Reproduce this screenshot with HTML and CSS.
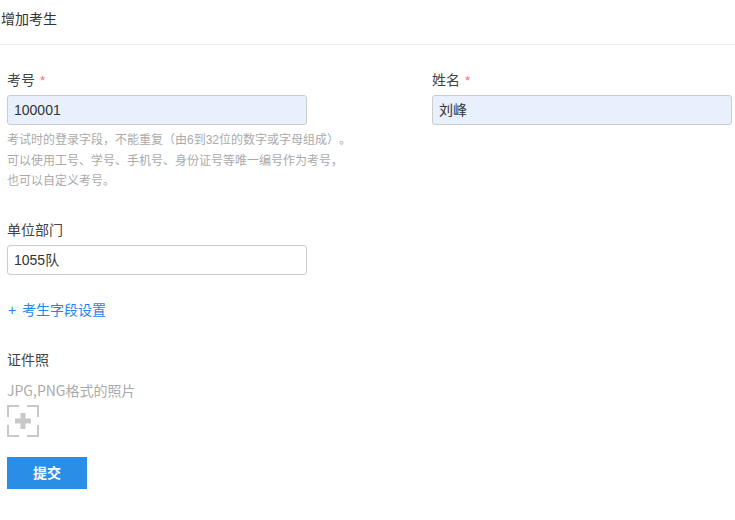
FILE: index.html
```
<!DOCTYPE html>
<html lang="zh">
<head>
<meta charset="utf-8">
<title>增加考生</title>
<link rel="stylesheet" href="styles.css">
</head>
<body>
<header class="page-head">增加考生</header>
<form class="form">
  <div class="row">
    <div class="col-left">
      <label class="label">考号 <span class="req">*</span></label>
      <div class="input filled">100001</div>
      <p class="hint">考试时的登录字段，不能重复（由6到32位的数字或字母组成）。<br>可以使用工号、学号、手机号、身份证号等唯一编号作为考号，<br>也可以自定义考号。</p>
    </div>
    <div class="col-right">
      <label class="label">姓名 <span class="req">*</span></label>
      <div class="input filled">刘峰</div>
    </div>
  </div>
  <div class="group-dept">
    <label class="label">单位部门</label>
    <div class="input">1055队</div>
  </div>
  <div class="link"><span class="plus">+</span>考生字段设置</div>
  <div class="label photo-label">证件照</div>
  <div class="photo-hint">JPG,PNG格式的照片</div>
  <svg class="upload" width="32" height="32" viewBox="0 0 32 32" fill="none">
    <path d="M1 12V1H12M20 1H31V12M31 20V31H20M12 31H1V20" stroke="#c8c8c8" stroke-width="2"/>
    <path d="M16 8V24M8 16H24" stroke="#c8c8c8" stroke-width="5"/>
  </svg>
  <button type="button" class="submit">提交</button>
</form>
</body>
</html>
```
FILE: styles.css
```
* { box-sizing: border-box; }
html, body { margin: 0; padding: 0; background: #fff; }
body {
  width: 735px;
  height: 520px;
  overflow: hidden;
  font-family: "Liberation Sans", "Noto Sans CJK SC", sans-serif;
  font-size: 14px;
  color: #333;
  text-spacing-trim: space-all;
}
.page-head {
  height: 45px;
  padding-left: 1px;
  line-height: 38px;
  border-bottom: 1px solid #eee;
  font-size: 14px;
}
.form { padding: 25px 0 0 7px; }
.row { display: flex; }
.col-left { width: 425px; }
.col-right { width: 300px; }
.label {
  display: block;
  height: 20px;
  line-height: 20px;
  font-size: 14px;
  color: #444;
}
.req { color: #f56c6c; margin-left: 1px; font-size: 13px; }
.input {
  width: 300px;
  height: 30px;
  margin-top: 5px;
  padding-left: 6px;
  line-height: 28px;
  font-size: 14px;
  color: #333;
  border: 1px solid #ccc;
  border-radius: 3px;
  background: #fff;
}
.filled { background: #e8f0fe; }
.hint {
  margin: 5px 0 0;
  font-size: 12px;
  line-height: 20.5px;
  color: #aaa;
}
.group-dept { margin-top: 28px; }
.link { margin-top: 25px; height: 20px; line-height: 20px; color: #1a86f0; }
.plus { display: inline-block; width: 15px; padding-left: 1px; }
.photo-label { margin-top: 30px; }
.photo-hint {
  margin-top: 10px;
  height: 20px;
  line-height: 20px;
  color: #aaa;
  font-family: "Noto Sans CJK SC", sans-serif;
}
.upload { display: block; margin-top: 5px; }
.submit {
  display: block;
  width: 80px;
  height: 32px;
  margin-top: 20px;
  padding: 0 0 2px;
  border: 0;
  background: #2a8ee6;
  color: #fff;
  font: bold 14px "Noto Sans CJK SC", sans-serif;
}
```
